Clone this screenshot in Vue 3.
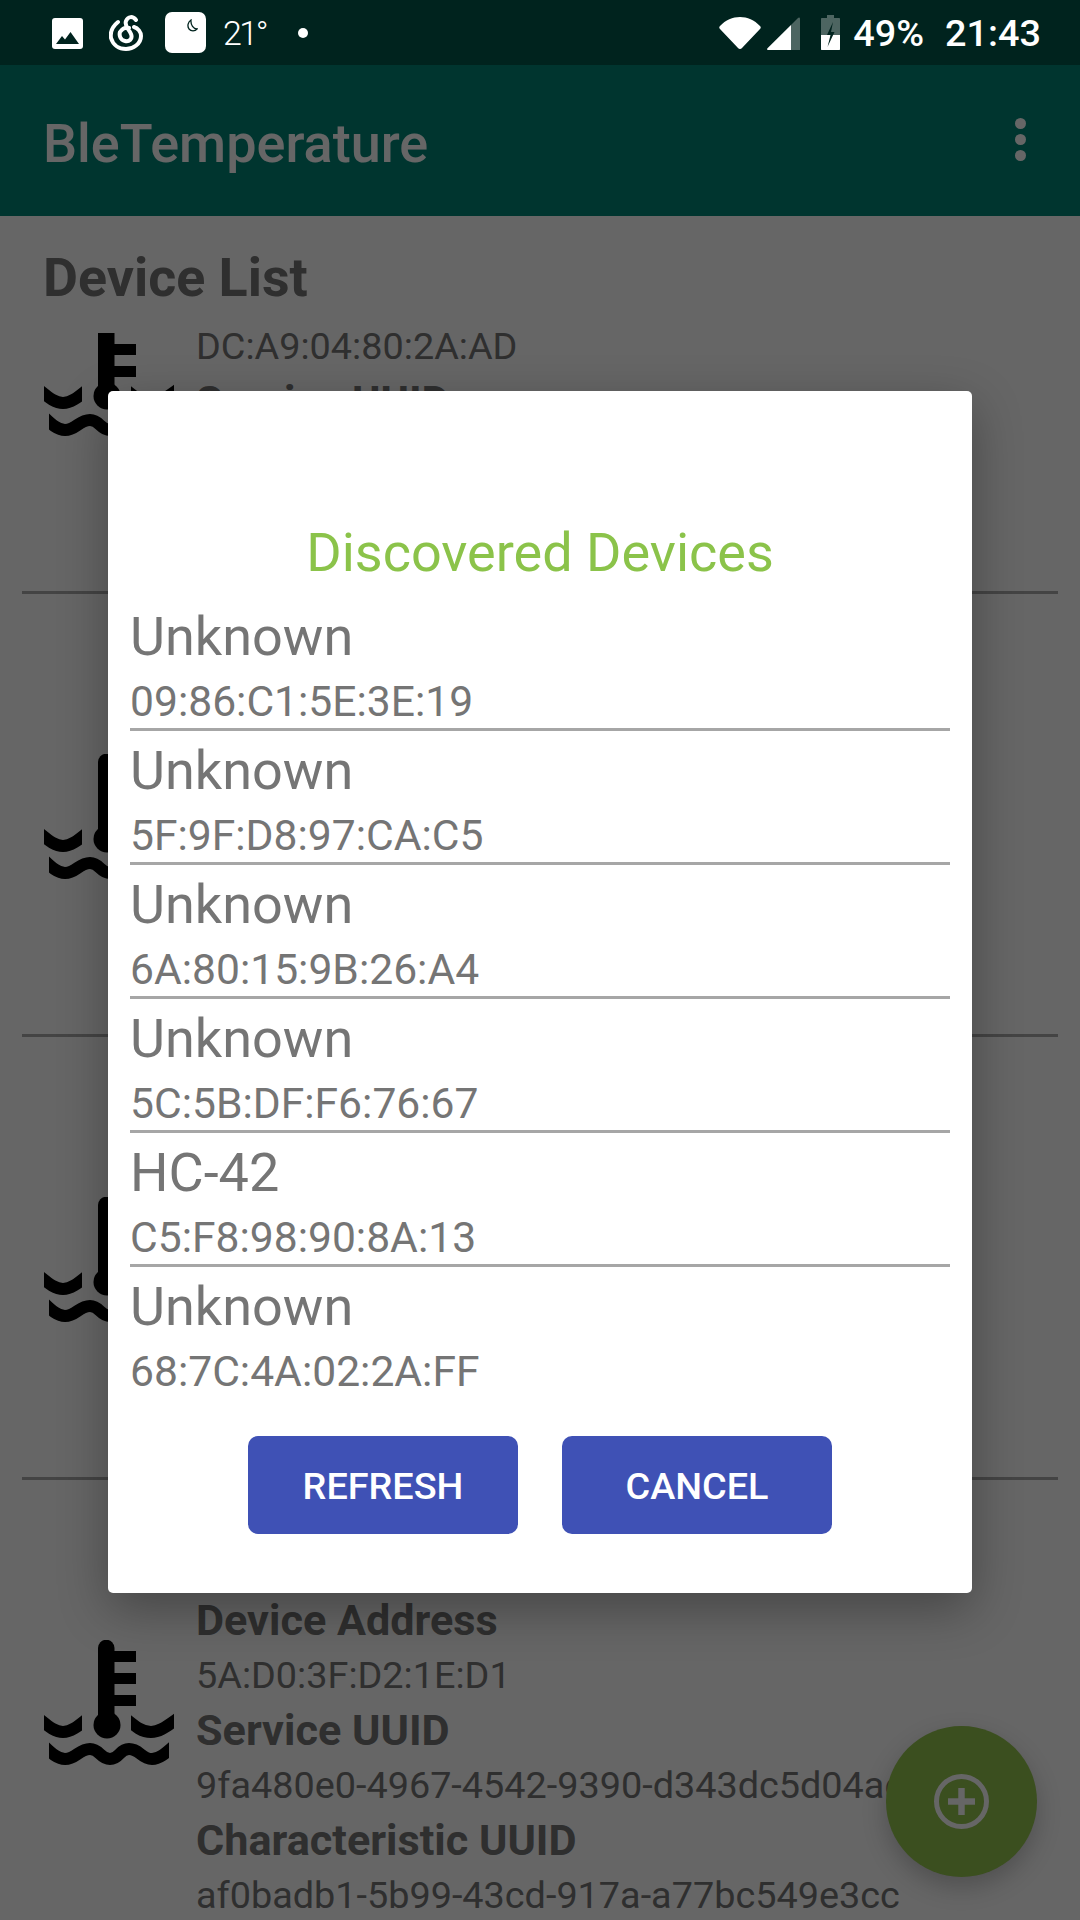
<script setup>
const rows = [
  { label: 'Device Name', value: 'Unknown' },
  { label: 'Device Address' },
  { label: 'Service UUID', value: '9fa480e0-4967-4542-9390-d343dc5d04ae' },
  { label: 'Characteristic UUID', value: 'af0badb1-5b99-43cd-917a-a77bc549e3cc' }
]
const addresses = ['DC:A9:04:80:2A:AD', 'E4:11:7B:20:6C:9E', 'F2:3C:58:A1:07:4B', '5A:D0:3F:D2:1E:D1']
const items = addresses.map((address) =>
  rows.map((r) => ({ label: r.label, value: r.value || address }))
)
const found = [
  { name: 'Unknown', mac: '09:86:C1:5E:3E:19' },
  { name: 'Unknown', mac: '5F:9F:D8:97:CA:C5' },
  { name: 'Unknown', mac: '6A:80:15:9B:26:A4' },
  { name: 'Unknown', mac: '5C:5B:DF:F6:76:67' },
  { name: 'HC-42', mac: 'C5:F8:98:90:8A:13' },
  { name: 'Unknown', mac: '68:7C:4A:02:2A:FF' }
]
</script>

<template>
  <div class="phone">
    <div class="status">
      <svg class="s-img" viewBox="0 0 31 31">
        <rect width="31" height="31" rx="3" fill="#fff" />
        <path d="M4 26 L10 18 L13 21.5 L18.5 14 L27 26 Z" fill="#00231e" />
      </svg>
      <svg class="s-swirl" viewBox="0 0 34 36" fill="none" stroke="#fff" stroke-width="4" stroke-linecap="round">
        <path d="M27 5 C24 1 19 1 17 6 C15 11 20 14 22 19 C24 24 20 27 16 26 C11 25 10 20 11 17 C13 14 16 12 20 13 M9 7 C4 11 1 17 2 23 C4 30 10 34 17 34 C24 34 32 29 32 21 C32 17 29 13 25 12" />
      </svg>
      <div class="s-tile">
        <svg class="s-moon" viewBox="0 0 12 13" fill="none" stroke="#00231e" stroke-width="1.3">
          <path d="M5 1 C2 3 1 7 3 10 C5 12.5 9 12.5 11 10 C7.5 10 4.5 6 5 1 Z" />
        </svg>
      </div>
      <span class="s-temp">21°</span>
      <span class="s-dot"></span>
      <span class="s-spacer"></span>
      <svg class="s-wifi" viewBox="0 0 42 33">
        <path d="M1 10 C12 -2 30 -2 41 10 C42 11 42 12 41 13 L23 32 C22 33.300 20 33.300 19 32 L1 13 C0 12 0 11 1 10 Z" fill="#fff" />
      </svg>
      <svg class="s-signal" viewBox="0 0 33 33">
        <path d="M24 8 L31 1 C32 0 33 0.500 33 2 L33 33 L24 33 Z" fill="#fff" opacity="0.3" />
        <path d="M24 8 L24 33 L1 33 C0 33 -0.300 32 0.500 31.300 Z" fill="#fff" />
      </svg>
      <svg class="s-batt" viewBox="0 0 19 35">
        <path d="M6 0 H13 V3 H18 C18.600 3 19 3.400 19 4 V34 C19 34.600 18.600 35 18 35 H1 C0.400 35 0 34.600 0 34 V4 C0 3.400 0.400 3 1 3 H6 Z" fill="#fff" opacity="0.3" />
        <path d="M0 20 H19 V34 C19 34.600 18.600 35 18 35 H1 C0.400 35 0 34.600 0 34 Z" fill="#fff" />
        <path d="M12 7 L6 20 H9.500 L6.500 32 L13.500 17 H10 Z" fill="#00231e" />
      </svg>
      <span class="s-pct">49%</span>
      <span class="s-time">21:43</span>
    </div>

    <header class="appbar">
      <span class="appbar-title">BleTemperature</span>
      <div class="more"><i></i><i></i><i></i></div>
    </header>

    <h1 class="heading">Device List</h1>

    <div class="list">
      <div class="list-inner">
        <div v-for="(item, i) in items" :key="i" class="item">
          <div class="icon-col">
            <svg class="coolant" viewBox="0 0 130 125" fill="none" stroke="#000" stroke-width="12">
              <path d="M54 8 A8.250 8.250 0 0 1 70.500 8 V80 H54 Z" fill="#000" stroke="none" />
              <path d="M70 11 H92 V22 H70 Z M70 33 H92 V44 H70 Z M70 55 H92 V66 H70 Z" fill="#000" stroke="none" />
              <circle cx="63" cy="85" r="13.500" fill="#000" stroke="none" />
              <svg x="0" y="70" width="38" height="35" viewBox="0 70 38 35">
                <path d="M-6 78 C3 85 10 92 19 92 C27 92 33 87 44 78" />
              </svg>
              <svg x="87" y="70" width="43" height="35" viewBox="87 70 43 35">
                <path d="M81 78 C92 87 98 92 107 92 C116 92 123 86 136 77" />
              </svg>
              <svg x="5" y="95" width="120" height="35" viewBox="5 95 120 35">
                <path d="M-2 104 C8 114 14 119 21 119 C32 119 35 109 46 109 C56 109 56 119 66 119 C76 119 75 109 85 109 C96 109 97 119 108 119 C115 119 121 114 132 104" />
              </svg>
            </svg>
          </div>
          <div class="text-col">
            <template v-for="row in item" :key="row.label">
              <div class="label">{{ row.label }}</div>
              <div class="value">{{ row.value }}</div>
            </template>
          </div>
        </div>
      </div>
    </div>

    <div class="scrim"></div>

    <button class="fab" type="button" aria-label="Add">
      <svg viewBox="0 0 55 55" fill="none" stroke="#666">
        <circle cx="27.500" cy="27.500" r="25" stroke-width="5" />
        <path d="M27.500 14 V41 M14 27.500 H41" stroke-width="6.500" />
      </svg>
    </button>

    <div class="dialog">
      <div class="dialog-title">Discovered Devices</div>
      <div class="found">
        <div v-for="d in found" :key="d.mac" class="found-row">
          <div class="found-name">{{ d.name }}</div>
          <div class="found-mac">{{ d.mac }}</div>
        </div>
      </div>
      <div class="actions">
        <button class="btn" type="button">REFRESH</button>
        <button class="btn" type="button">CANCEL</button>
      </div>
    </div>
  </div>
</template>

<style scoped>
.phone {
  position: relative;
  width: 1080px;
  height: 1920px;
  display: flex;
  flex-direction: column;
  overflow: hidden;
  background: #fff;
  font-family: Roboto, "Liberation Sans", sans-serif;
}

.status {
  position: relative;
  z-index: 2;
  height: 65px;
  flex: none;
  background: #00231e;
  display: flex;
  align-items: center;
  padding-left: 52px;
  color: #fff;
  box-sizing: border-box;
}
.s-img { width: 31px; height: 31px; margin-top: 1px; }
.s-swirl { width: 34px; height: 36px; margin-left: 26px; }
.s-tile {
  width: 41px;
  height: 41px;
  margin-left: 22px;
  background: #fff;
  border-radius: 7px;
  display: flex;
  justify-content: flex-end;
  align-items: flex-start;
}
.s-moon { width: 12px; height: 13px; margin: 7px 8px 0 0; }
.s-temp { font-size: 34px; font-weight: 300; letter-spacing: -2.5px; margin-left: 17px; width: 50px; }
.s-dot {
  width: 10px;
  height: 10px;
  border-radius: 50%;
  background: #fff;
  margin-left: 25px;
}
.s-spacer { flex: 1; }
.s-wifi { width: 42px; height: 33px; margin-top: -1px; }
.s-signal { width: 33px; height: 33px; margin-left: 6px; margin-top: 2px; }
.s-batt { width: 19px; height: 35px; margin-left: 21px; }
.s-pct { font-size: 37.8px; font-weight: 500; margin-left: 13px; }
.s-time { font-size: 37.8px; font-weight: 500; margin-left: 21px; margin-right: 39px; }

.appbar {
  height: 151px;
  flex: none;
  background: #008577;
  display: flex;
  align-items: center;
  justify-content: space-between;
  padding: 0 54px 0 43px;
  color: #fff;
  box-sizing: border-box;
}
.appbar-title { font-size: 54px; font-weight: 500; padding-top: 5px; }
.more { display: flex; flex-direction: column; gap: 5px; margin-bottom: 3px; }
.more i { display: block; width: 11px; height: 11px; border-radius: 50%; background: #fff; }

.heading {
  margin: 0;
  height: 117px;
  flex: none;
  padding: 33px 0 0 43px;
  box-sizing: border-box;
  font-size: 53.8px;
  line-height: 57px;
  font-weight: 700;
  color: #757575;
}

.list { flex: 1; min-height: 0; overflow: hidden; }
.list-inner { margin-top: -182px; }
.item {
  display: flex;
  margin: 0 22px;
  height: 443px;
  box-sizing: border-box;
  border-bottom: 3px solid #aaa;
}
.icon-col { width: 174px; flex: none; padding: 160px 0 0 22px; box-sizing: border-box; }
.coolant { width: 130px; height: 125px; display: block; }
.text-col { flex: 1; min-width: 0; padding-top: 3px; white-space: nowrap; color: #757575; line-height: 55px; }
.label { font-size: 43.2px; font-weight: 700; }
.value { font-size: 37.8px; }

.scrim {
  position: absolute;
  inset: 0;
  background: rgba(0, 0, 0, 0.6);
}

.fab {
  position: absolute;
  right: 43px;
  bottom: 43px;
  z-index: 1;
  width: 151px;
  height: 151px;
  padding: 0;
  border: 0;
  border-radius: 50%;
  background: #3b4f1f;
  box-shadow: 0 10px 24px rgba(0, 0, 0, 0.22);
  display: flex;
  align-items: center;
  justify-content: center;
}
.fab svg { width: 55px; height: 55px; }

.dialog {
  position: absolute;
  z-index: 3;
  left: 108px;
  top: 391px;
  width: 864px;
  height: 1202px;
  box-sizing: border-box;
  padding: 133px 22px 0 22px;
  background: #fff;
  border-radius: 5px;
  box-shadow: 0 16px 50px rgba(0, 0, 0, 0.32);
}
.dialog-title {
  text-align: center;
  color: #8bc34a;
  font-size: 54px;
  line-height: 57px;
}
.found { margin-top: 16px; color: #757575; }
.found-row {
  height: 134px;
  box-sizing: border-box;
  padding-top: 8px;
  border-bottom: 3px solid #a6a6a6;
}
.found-row:last-child { height: 131px; border-bottom: 0; }
.found-name { font-size: 54px; line-height: 63px; margin: 0 0 8px 0; }
.found-mac { font-size: 42.6px; line-height: 51px; }
.actions { margin-top: 38px; display: flex; justify-content: center; gap: 44px; }
.btn {
  width: 270px;
  height: 98px;
  padding: 2px 0 0;
  border: 0;
  border-radius: 10px;
  background: #3f51b5;
  color: #fff;
  font-family: inherit;
  font-size: 37.8px;
  font-weight: 500;
}
</style>
